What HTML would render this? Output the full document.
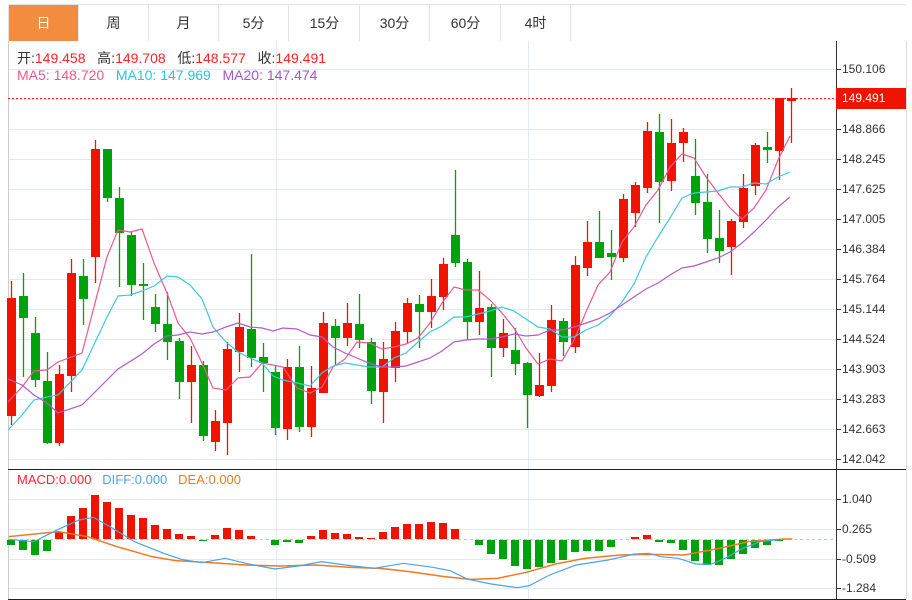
<!DOCTYPE html>
<html><head><meta charset="utf-8">
<style>
*{margin:0;padding:0;box-sizing:border-box}
body{width:912px;height:600px;background:#fff;font-family:"Liberation Sans","Noto Sans CJK SC",sans-serif;overflow:hidden;position:relative}
.tabs{position:absolute;left:8px;top:4px;width:898px;height:37px;border-top:1px solid #e2e2e2;border-left:1px solid #e2e2e2}
.tab{position:absolute;top:0;height:36px;width:70px;border-right:1px solid #e2e2e2;text-align:center;line-height:36px;font-size:14px;color:#333}
.tab.on{background:#f28c3e;color:#fff}
.t{position:absolute;font-size:14px;white-space:nowrap}
.ax{position:absolute;left:842px;font-size:12px;color:#333}
</style></head><body>
<div class="tabs">
<div class="tab on" style="left:0">日</div>
<div class="tab" style="left:70px">周</div>
<div class="tab" style="left:140px">月</div>
<div class="tab" style="left:210px">5分</div>
<div class="tab" style="left:281px">15分</div>
<div class="tab" style="left:351px">30分</div>
<div class="tab" style="left:422px">60分</div>
<div class="tab" style="left:492px">4时</div>
</div>
<svg id="s" width="912" height="600" style="position:absolute;left:0;top:0">
<g stroke="#e3eaf0" stroke-width="1" id="grid"></g>
<line x1="8.5" y1="41" x2="8.5" y2="599" stroke="#ccc"/>
<line x1="836.5" y1="41" x2="836.5" y2="599" stroke="#333"/>
<line x1="906.5" y1="41" x2="906.5" y2="599" stroke="#ddd"/>
<line x1="8" y1="469.5" x2="906" y2="469.5" stroke="#222"/>
<line x1="8" y1="599.5" x2="906" y2="599.5" stroke="#222"/>
<line x1="8" y1="98.5" x2="836" y2="98.5" stroke="#f02020" stroke-dasharray="2,2"/>
<line x1="8" y1="539.5" x2="836" y2="539.5" stroke="#9ed3ea" stroke-dasharray="3,3"/>
<g id="c"></g>
<rect x="836" y="88" width="70" height="21" fill="#f01400"/>
</svg>
<div class="t" style="left:17px;top:48px;color:#333">开:<span style="color:#f22">149.458</span>&nbsp;&nbsp;&nbsp;高:<span style="color:#f22">149.708</span>&nbsp;&nbsp;&nbsp;低:<span style="color:#f22">148.577</span>&nbsp;&nbsp;&nbsp;收:<span style="color:#f22">149.491</span></div>
<div class="t" style="left:17px;top:67px"><span style="color:#ec5a8c">MA5: 148.720</span>&nbsp;&nbsp;&nbsp;<span style="color:#2cc3dc">MA10: 147.969</span>&nbsp;&nbsp;&nbsp;<span style="color:#a656c6">MA20: 147.474</span></div>
<div class="t" style="left:17px;top:472px;font-size:13px"><span style="color:#f23">MACD:0.000</span>&nbsp;&nbsp;&nbsp;<span style="color:#4aa3ef">DIFF:0.000</span>&nbsp;&nbsp;&nbsp;<span style="color:#f07a20">DEA:0.000</span></div>
<div class="ax" style="top:62px">150.106</div>
<div class="ax" style="top:91px;color:#fff">149.491</div>
<div class="ax" style="top:122px">148.866</div>
<div class="ax" style="top:152px">148.245</div>
<div class="ax" style="top:182px">147.625</div>
<div class="ax" style="top:212px">147.005</div>
<div class="ax" style="top:242px">146.384</div>
<div class="ax" style="top:272px">145.764</div>
<div class="ax" style="top:302px">145.144</div>
<div class="ax" style="top:332px">144.524</div>
<div class="ax" style="top:362px">143.903</div>
<div class="ax" style="top:392px">143.283</div>
<div class="ax" style="top:422px">142.663</div>
<div class="ax" style="top:452px">142.042</div>
<div class="ax" style="top:492px">1.040</div>
<div class="ax" style="top:522px">0.265</div>
<div class="ax" style="top:552px">-0.509</div>
<div class="ax" style="top:581px">-1.284</div>
<script>
var NS="http://www.w3.org/2000/svg";
function el(p,n,a){var e=document.createElementNS(NS,n);for(var k in a)e.setAttribute(k,a[k]);p.appendChild(e);return e;}
var g=document.getElementById('grid'),c=document.getElementById('c');
for(var y=69;y<=459;y+=30){el(g,'line',{x1:8,x2:836,y1:y+.5,y2:y+.5});el(g,'line',{x1:836,x2:841,y1:y+.5,y2:y+.5,stroke:'#333'});}
[499,529,559,588].forEach(function(y){el(g,'line',{x1:8,x2:836,y1:y+.5,y2:y+.5});el(g,'line',{x1:836,x2:841,y1:y+.5,y2:y+.5,stroke:'#333'});});
el(g,'line',{x1:836,x2:841,y1:98.5,y2:98.5,stroke:'#333'});
[276.5,528.5].forEach(function(x){el(g,'line',{x1:x,x2:x,y1:41,y2:599});});
var R='#f01400',G='#00a20c';
var K=[[R,298,416,281,425],[G,296,318,273,377],[G,333,380,317,387],[G,381,443,352,444],[R,374,443,365,446],[R,273,376,259,392],[G,276,299,259,325],[R,149,257,140,283],[G,149,198,149,202],[G,198,233,187,287],[G,235,285,232,296],[G,284,286,263,320],[G,307,324,294,332],[G,324,342,292,360],[G,341,382,338,399],[R,365,382,346,423],[G,365,436,361,441],[R,421,442,410,451],[R,349,423,342,455],[R,327,352,313,372],[G,329,358,254,367],[G,357,363,343,392],[G,372,428,365,435],[R,367,429,359,440],[G,367,427,346,432],[R,388,427,366,437],[R,323,393,312,393],[G,326,338,319,366],[R,323,338,303,346],[G,324,340,294,348],[G,342,391,338,404],[R,359,392,342,423],[R,331,368,322,382],[R,303,332,298,343],[G,304,312,295,348],[R,296,312,279,328],[R,264,297,258,310],[G,235,263,170,267],[G,262,322,259,340],[R,308,322,271,335],[G,307,348,304,377],[R,333,348,319,357],[G,350,364,328,375],[G,363,395,362,428],[R,385,396,353,397],[R,320,386,305,392],[G,321,342,318,356],[R,265,347,256,353],[R,242,268,221,276],[G,242,258,211,258],[G,253,257,230,280],[R,199,258,194,262],[R,185,213,182,227],[R,131,188,122,193],[G,132,182,114,223],[R,143,181,119,191],[R,132,143,128,162],[G,176,203,139,215],[G,202,239,174,253],[G,238,251,210,263],[R,221,247,219,275],[R,188,222,174,228],[R,145,186,143,195],[G,147,150,132,163],[R,98,151,98,180],[R,98,101,88,143]];
var H=[5,10,15,11,-7,-23,-31,-44,-37,-31,-24,-21,-14,-10,-5,-3,1,-4,-11,-9,-3,0,5,2,3,-3,-9,-6,-5,-2,-1,-7,-12,-15,-15,-17,-16,-10,0,5,14,19,26,29,27,23,20,12,11,11,7,0,-2,-4,2,3,10,21,25,25,19,14,8,5,1,0];
function pl(pts,col,w){el(c,'polyline',{points:pts.map(function(p){return p.join(',')}).join(' '),fill:'none',stroke:col,'stroke-width':w||1.2});}
H.forEach(function(h,i){var x=11+12*i;if(h==0)return;var col=h<0?R:G;el(c,'rect',{x:x-4,y:h<0?539+h:540,width:8,height:Math.abs(h),fill:col});});
K.forEach(function(k,i){var x=11+12*i;el(c,'line',{x1:x+.5,x2:x+.5,y1:k[3],y2:k[4],stroke:k[0],'stroke-width':1.3});el(c,'rect',{x:x-4,y:k[1],width:9,height:Math.max(2,k[2]-k[1]),fill:k[0]});});
pl([[8,402],[22,387],[34,371],[47,370],[58,362],[82,353],[107,257],[118,230],[130,232],[142,229],[154,263],[167,293],[178,323],[190,338],[202,363],[213,388],[226,390],[238,378],[250,377],[262,363],[273,365],[283,367],[297,388],[310,393],[322,387],[333,367],[345,359],[357,342],[369,343],[382,349],[394,347],[406,344],[418,338],[430,323],[442,303],[454,287],[466,290],[478,290],[490,300],[502,313],[514,328],[526,348],[538,364],[550,359],[562,361],[574,340],[586,312],[598,285],[610,272],[622,242],[634,227],[646,205],[658,190],[670,167],[682,154],[694,158],[706,177],[718,193],[730,208],[742,219],[754,208],[766,190],[778,160],[790,136]],'#ec5a8c');
pl([[8,430],[22,415],[34,400],[47,397],[58,395],[82,370],[107,317],[118,296],[130,295],[142,291],[154,286],[167,276],[178,277],[190,285],[202,299],[213,327],[226,342],[238,352],[250,358],[262,363],[273,376],[283,380],[297,383],[310,386],[322,373],[333,366],[345,363],[357,365],[369,367],[382,367],[394,358],[406,353],[418,342],[430,332],[442,326],[454,317],[466,317],[478,314],[490,311],[502,307],[514,311],[526,319],[538,327],[550,329],[562,337],[574,337],[586,330],[598,325],[610,316],[622,302],[634,284],[646,257],[658,237],[670,218],[682,198],[694,193],[706,192],[718,191],[730,187],[742,187],[754,183],[766,184],[778,177],[790,172]],'#3fc8de');
pl([[8,379],[22,385],[34,395],[47,403],[58,413],[82,405],[107,380],[118,369],[142,354],[154,344],[167,336],[178,335],[190,332],[202,334],[213,332],[226,327],[238,323],[250,327],[262,328],[273,331],[283,328],[297,329],[310,335],[322,337],[333,347],[345,353],[357,358],[369,363],[382,367],[394,367],[406,366],[418,362],[430,358],[442,351],[454,342],[466,340],[478,339],[490,339],[502,337],[514,334],[526,336],[538,335],[550,330],[562,330],[574,327],[586,323],[598,319],[610,313],[622,305],[634,297],[646,289],[658,283],[670,275],[682,268],[694,266],[706,262],[718,258],[730,252],[742,243],[754,232],[766,220],[778,207],[790,197]],'#b25cc8');
function cv(a){return a.map(function(p){return [p[0]/1.71,440+p[1]/3];});}
pl(cv([[15,290],[100,275],[150,290],[200,320],[260,350],[300,362],[360,368],[420,375],[480,378],[540,375],[600,382],[650,385],[700,395],[760,410],[805,418],[850,415],[900,397],[950,372],[1000,355],[1060,345],[1110,343],[1170,345],[1230,325],[1280,305],[1340,297],[1355,297]]),'#f07a20',1.5);
pl(cv([[15,298],[58,305],[100,268],[135,240],[160,232],[190,262],[230,305],[280,340],[310,358],[345,368],[385,355],[420,370],[470,387],[510,378],[550,365],[590,375],[640,385],[690,370],[740,382],[770,392],[800,418],[840,432],[885,443],[905,437],[940,405],[985,375],[1040,360],[1085,342],[1110,340],[1130,350],[1160,355],[1190,372],[1215,373],[1240,355],[1270,325],[1300,305],[1340,297]]),'#4aa3ef',1.2);
</script>
</body></html>
